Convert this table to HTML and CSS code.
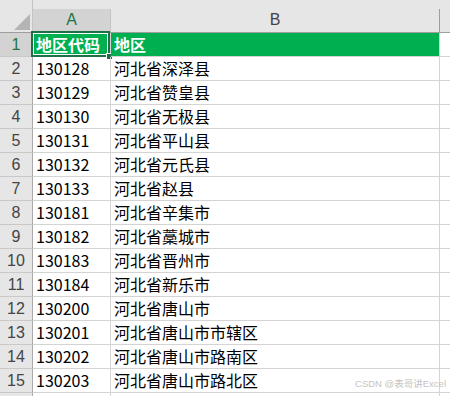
FILE: index.html
```html
<!DOCTYPE html>
<html lang="zh-CN">
<head>
<meta charset="utf-8">
<title>Sheet</title>
<link rel="stylesheet" href="styles.css">
</head>
<body>
<div class="sheet">
  <div class="hdr">
    <div class="corner"><span class="tri"></span></div>
    <div class="colh sel">A</div>
    <div class="colh">B</div>
    <div class="colh last"></div>
  </div>
  <div class="row">
    <div class="rowh sel">1</div>
    <div class="cell a green bold">地区代码<span class="selbox"><span class="handle"></span></span></div>
    <div class="cell b green bold">地区</div>
    <div class="cell c"></div>
  </div>
  <div class="row"><div class="rowh">2</div><div class="cell a">130128</div><div class="cell b">河北省深泽县</div><div class="cell c"></div></div>
  <div class="row"><div class="rowh">3</div><div class="cell a">130129</div><div class="cell b">河北省赞皇县</div><div class="cell c"></div></div>
  <div class="row"><div class="rowh">4</div><div class="cell a">130130</div><div class="cell b">河北省无极县</div><div class="cell c"></div></div>
  <div class="row"><div class="rowh">5</div><div class="cell a">130131</div><div class="cell b">河北省平山县</div><div class="cell c"></div></div>
  <div class="row"><div class="rowh">6</div><div class="cell a">130132</div><div class="cell b">河北省元氏县</div><div class="cell c"></div></div>
  <div class="row"><div class="rowh">7</div><div class="cell a">130133</div><div class="cell b">河北省赵县</div><div class="cell c"></div></div>
  <div class="row"><div class="rowh">8</div><div class="cell a">130181</div><div class="cell b">河北省辛集市</div><div class="cell c"></div></div>
  <div class="row"><div class="rowh">9</div><div class="cell a">130182</div><div class="cell b">河北省藁城市</div><div class="cell c"></div></div>
  <div class="row"><div class="rowh">10</div><div class="cell a">130183</div><div class="cell b">河北省晋州市</div><div class="cell c"></div></div>
  <div class="row"><div class="rowh">11</div><div class="cell a">130184</div><div class="cell b">河北省新乐市</div><div class="cell c"></div></div>
  <div class="row"><div class="rowh">12</div><div class="cell a">130200</div><div class="cell b">河北省唐山市</div><div class="cell c"></div></div>
  <div class="row"><div class="rowh">13</div><div class="cell a">130201</div><div class="cell b">河北省唐山市市辖区</div><div class="cell c"></div></div>
  <div class="row"><div class="rowh">14</div><div class="cell a">130202</div><div class="cell b">河北省唐山市路南区</div><div class="cell c"></div></div>
  <div class="row"><div class="rowh">15</div><div class="cell a">130203</div><div class="cell b">河北省唐山市路北区</div><div class="cell c"></div></div>
  <div class="row"><div class="rowh"></div><div class="cell a"></div><div class="cell b"></div><div class="cell c"></div></div>
  <div class="watermark">CSDN @表哥讲Excel</div>
</div>
</body>
</html>
```

FILE: styles.css
```css
html, body {
  margin: 0;
  padding: 0;
  overflow: hidden;
  background: #ffffff;
}

.sheet {
  position: relative;
  width: 450px;
  height: 396px;
  overflow: hidden;
  font-family: "Noto Sans CJK SC", "Liberation Sans", sans-serif;
  color: #000;
}

.hdr {
  display: flex;
  align-items: flex-end;
  height: 33px;
  box-sizing: border-box;
  background: #e6e6e6;
  border-bottom: 1px solid #9e9e9e;
}

.corner {
  position: relative;
  width: 33px;
  height: 32px;
  box-sizing: border-box;
  border-right: 1px solid #c4c4c4;
  flex: none;
}

.tri {
  position: absolute;
  right: 2px;
  bottom: 2px;
  width: 16px;
  height: 16px;
  background: #b4b4b4;
  clip-path: polygon(100% 0, 100% 100%, 0 100%);
}

.colh {
  height: 23px;
  box-sizing: border-box;
  border-right: 1px solid #c4c4c4;
  flex: none;
  display: flex;
  align-items: center;
  justify-content: center;
  font-family: "Liberation Sans", "Noto Sans", sans-serif;
  font-size: 16px;
  color: #444;
  padding-bottom: 1px;
}
.colh.sel {
  width: 78px;
  background: #d3d3d3;
  color: #217346;
}
.colh:nth-child(3) { width: 329px; border-right-color: #9e9e9e; }
.colh.last { width: 10px; border-right: none; }

.row {
  display: flex;
  height: 24px;
}

.rowh {
  width: 33px;
  flex: none;
  box-sizing: border-box;
  background: #e6e6e6;
  border-right: 1px solid #ababab;
  border-bottom: 1px solid #c8c8c8;
  display: flex;
  align-items: center;
  justify-content: center;
  font-family: "Liberation Sans", "Noto Sans", sans-serif;
  font-size: 16px;
  color: #444;
}
.rowh.sel {
  background: #d3d3d3;
  color: #217346;
}

.cell {
  position: relative;
  flex: none;
  box-sizing: border-box;
  border-right: 1px solid #d4d4d4;
  border-bottom: 1px solid #d4d4d4;
  font-size: 16px;
  line-height: 23px;
  padding-left: 3px;
  white-space: nowrap;
}
.cell.a { width: 78px; }
.cell.b { width: 329px; }
.cell.c { width: 10px; border-right: none; }

.green {
  background: #00b050;
  color: #ffffff;
}
.bold { font-weight: 700; }

.selbox {
  position: absolute;
  left: -2px;
  top: -2px;
  width: 79px;
  height: 26px;
  box-sizing: border-box;
  border: 2px solid #1e7145;
  box-shadow: inset 0 0 0 1px #ffffff;
}

.handle {
  position: absolute;
  right: -5px;
  bottom: -5px;
  width: 7px;
  height: 7px;
  box-sizing: border-box;
  background: #1e7145;
  border: 1px solid #ffffff;
}

.watermark {
  position: absolute;
  right: 4px;
  bottom: 7px;
  font-family: "Liberation Sans", "Noto Sans CJK SC", sans-serif;
  font-size: 9.5px;
  color: #c4c4c4;
  line-height: 10px;
}
```
